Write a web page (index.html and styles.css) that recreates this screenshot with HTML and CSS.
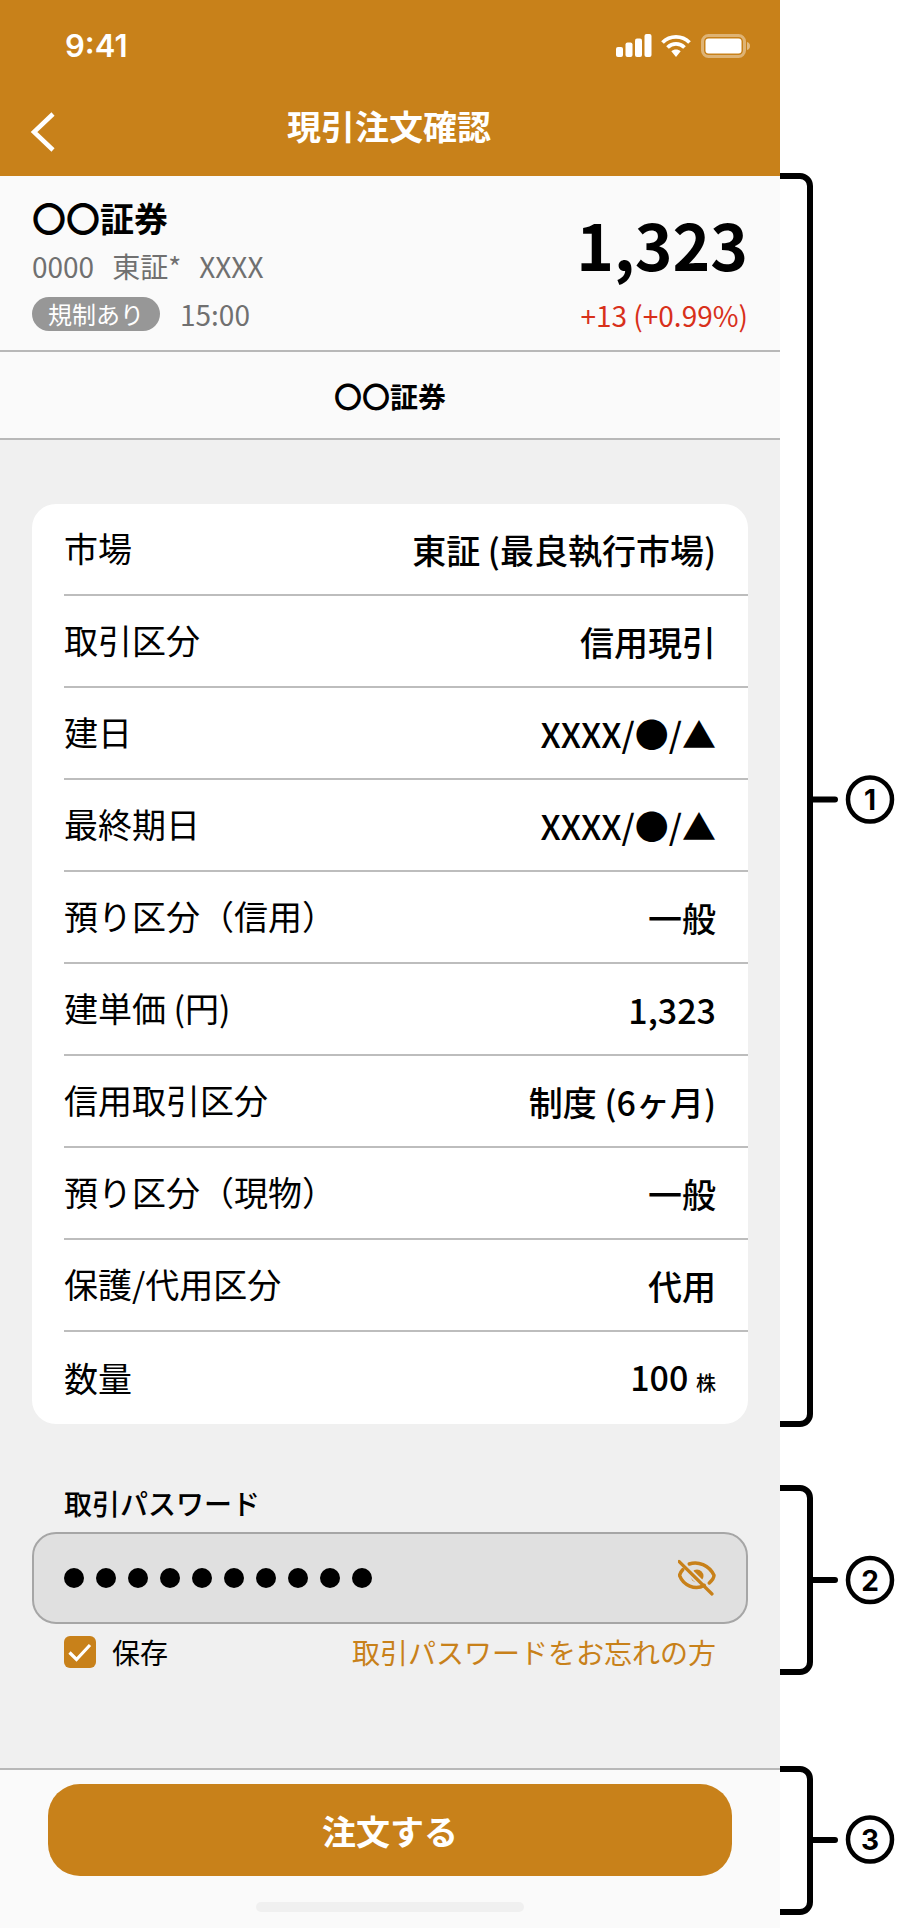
FILE: index.html
```html
<!DOCTYPE html>
<html lang="ja">
<head>
<meta charset="utf-8">
<title>現引注文確認</title>
<link rel="stylesheet" href="styles.css">
</head>
<body>
<div class="page">
  <div class="app">
    <header class="header">
      <div class="status">
        <span class="time">9:41</span>
        <div class="status-icons">
          <svg class="signal" width="36" height="23" viewBox="0 0 36 23"><rect x="0" y="13" width="7" height="10" rx="2"/><rect x="9.5" y="8.5" width="7" height="14.5" rx="2"/><rect x="19" y="4.500" width="7" height="18.500" rx="2"/><rect x="28.500" y="0" width="7" height="23" rx="2"/></svg>
          <svg class="wifi" width="30" height="23" viewBox="0 0 30 23"><path d="M1.500 8.500C9 1 21 1 28.500 8.500M6.500 13.500C11.500 8.700 18.500 8.700 23.500 13.500" fill="none" stroke="#fff" stroke-width="3.800"/><path d="M10.300 17.300C13 14.800 17 14.800 19.700 17.300L15 23Z" fill="#fff"/></svg>
          <svg class="battery" width="50" height="24" viewBox="0 0 50 24"><rect x="1.500" y="1.500" width="42" height="21" rx="6" fill="none" stroke="#fff" stroke-opacity=".4" stroke-width="3"/><rect x="4.500" y="4.500" width="36" height="15" rx="3" fill="#fff"/><path d="M46 8c2 .5 3 2 3 4s-1 3.500-3 4z" fill="#fff" fill-opacity=".45"/></svg>
        </div>
      </div>
      <nav class="nav">
        <svg class="back" width="28" height="42" viewBox="0 0 28 42"><path d="M24 3L5 21l19 18" fill="none" stroke="#fff" stroke-width="4.500"/></svg>
        <h1 class="title">現引注文確認</h1>
      </nav>
    </header>

    <section class="stock">
      <div class="stock-left">
        <div class="stock-name">〇〇証券</div>
        <div class="stock-meta"><span>0000</span><span>東証*</span><span>XXXX</span></div>
        <div class="stock-tags"><span class="badge">規制あり</span><span class="stock-time">15:00</span></div>
      </div>
      <div class="stock-right">
        <div class="price">1,323</div>
        <div class="change">+13 (+0.99%)</div>
      </div>
    </section>

    <div class="broker">〇〇証券</div>

    <main class="main">
      <div class="card">
        <div class="row"><span>市場</span><span class="val">東証 (最良執行市場)</span></div>
        <div class="row"><span>取引区分</span><span class="val">信用現引</span></div>
        <div class="row"><span>建日</span><span class="val">XXXX/●/▲</span></div>
        <div class="row"><span>最終期日</span><span class="val">XXXX/●/▲</span></div>
        <div class="row"><span>預り区分（信用）</span><span class="val">一般</span></div>
        <div class="row"><span>建単価 (円)</span><span class="val">1,323</span></div>
        <div class="row"><span>信用取引区分</span><span class="val">制度 (6ヶ月)</span></div>
        <div class="row"><span>預り区分（現物）</span><span class="val">一般</span></div>
        <div class="row"><span>保護/代用区分</span><span class="val">代用</span></div>
        <div class="row"><span>数量</span><span class="val">100 <small class="unit">株</small></span></div>
      </div>

      <div class="pw-label">取引パスワード</div>
      <div class="pw-input">
        <div class="dots"><i></i><i></i><i></i><i></i><i></i><i></i><i></i><i></i><i></i><i></i></div>
        <svg class="eye" width="38" height="38" viewBox="0 0 38 38">
          <circle cx="19" cy="17" r="6.500" fill="#c8811a"/>
          <path d="M1 2.500L34 35" stroke="#e0e0e0" stroke-width="7"/>
          <path d="M11.300 5C20 2 31 6 36 16.300C36 19 33.500 22 31.300 24M4.700 10.700C3 12.500 2 14.500 1.500 16.300C5 26 17 32 26.300 26.300" fill="none" stroke="#c8811a" stroke-width="3.500" stroke-linecap="round"/>
          <path d="M1 2.500L34 35" stroke="#c8811a" stroke-width="3.200" stroke-linecap="round"/>
        </svg>
      </div>
      <div class="pw-options">
        <label class="save">
          <svg class="check" width="32" height="32" viewBox="0 0 32 32"><rect width="32" height="32" rx="6" fill="#c8811a"/><path d="M5.500 16.500l7 7L26 9" fill="none" stroke="#fff" stroke-width="3.200"/></svg>
          <span>保存</span>
        </label>
        <a class="forgot">取引パスワードをお忘れの方</a>
      </div>
    </main>

    <footer class="footer">
      <button class="order">注文する</button>
      <div class="home"></div>
    </footer>
  </div>

  <svg class="notes" width="136" height="1928" viewBox="780 0 136 1928">
    <g fill="none" stroke="#000" stroke-width="6" stroke-linecap="butt">
      <path d="M780 176H800a10 10 0 0 1 10 10V1414a10 10 0 0 1-10 10H780"/>
      <path d="M780 1488H800a10 10 0 0 1 10 10V1662a10 10 0 0 1-10 10H780"/>
      <path d="M780 1769H800a10 10 0 0 1 10 10V1902a10 10 0 0 1-10 10H780"/>
      <path d="M810 799.500H835M810 1580H835M810 1840H835" stroke-linecap="round"/>
      <circle cx="870" cy="799.500" r="22" stroke-width="4.500"/>
      <circle cx="870" cy="1580" r="22" stroke-width="4.500"/>
      <circle cx="870" cy="1839.500" r="22" stroke-width="4.500"/>
    </g>
    <text class="note-num" x="870" y="810">1</text>
    <text class="note-num" x="870" y="1590.500">2</text>
    <text class="note-num" x="870" y="1850">3</text>
  </svg>
</div>
</body>
</html>
```
FILE: styles.css
```css
* { box-sizing: border-box; }
html, body { margin: 0; padding: 0; background: #fff; }
body { font-family: "Noto Sans CJK JP", "Noto Sans", sans-serif; color: #000; }
.page { display: flex; width: 916px; height: 1928px; overflow: hidden; }
.app { width: 780px; height: 1928px; flex: none; display: flex; flex-direction: column; background: #f0f0f0; }
.notes { flex: none; display: block; }
.note-num { font-family: Inter, sans-serif; font-weight: 700; font-size: 28px; text-anchor: middle; fill: #000; }

.header { height: 176px; background: #c8811a; color: #fff; flex: none; }
.status { height: 90px; display: flex; align-items: flex-start; justify-content: space-between; padding: 27px 29px 0 65px; }
.time { font-family: Inter, sans-serif; font-weight: 600; font-size: 31px; line-height: 38px; }
.status-icons { display: flex; align-items: flex-start; padding-top: 7px; }
.signal { fill: #fff; margin-right: 9px; }
.wifi { margin-right: 10px; }
.nav { height: 86px; position: relative; display: flex; align-items: center; justify-content: center; }
.back { position: absolute; left: 29px; top: 21px; }
.title { margin: 0; font-size: 34px; line-height: 48px; font-weight: 700; padding-right: 2px; transform: translateY(-7px); }

.stock { height: 176px; flex: none; background: #fafafa; border-bottom: 2px solid #b8b8b8; display: flex; justify-content: space-between; padding: 18px 32px 0; }
.stock-name { font-size: 34px; line-height: 48px; font-weight: 700; }
.stock-meta { display: flex; gap: 18px; font-size: 28px; line-height: 40px; color: #707070; margin-top: 4px; }
.stock-tags { display: flex; align-items: center; gap: 20px; margin-top: 8px; }
.badge { width: 128px; height: 34px; border-radius: 17px; background: #979797; color: #fff; font-size: 24px; line-height: 34px; text-align: center; }
.stock-time { font-size: 28px; line-height: 40px; color: #707070; }
.stock-right { text-align: right; }
.price { font-size: 64px; line-height: 90px; font-weight: 700; margin-top: 4px; }
.change { font-size: 28px; line-height: 40px; color: #d8301a; margin-top: 7px; }

.broker { height: 88px; flex: none; background: #fafafa; border-bottom: 2px solid #b8b8b8; text-align: center; font-size: 28px; line-height: 88px; font-weight: 700; }

.main { flex: 1; padding: 64px 32px 0; }
.card { background: #fff; border-radius: 24px; overflow: hidden; }
.row { height: 92px; margin-left: 32px; padding: 0 32px 2px 0; border-bottom: 2px solid #bdbdbd; display: flex; align-items: center; justify-content: space-between; font-size: 34px; line-height: 46px; }
.row:last-child { border-bottom: 0; padding-bottom: 0; }
.val { font-weight: 500; padding-top: 4px; }
.unit { font-size: 20px; }

.pw-label { font-size: 28px; font-weight: 500; line-height: 40px; margin: 59px 0 9px 32px; }
.pw-input { height: 92px; border: 2px solid #a6a6a6; border-radius: 24px; background: #e0e0e0; display: flex; align-items: center; justify-content: space-between; padding: 0 30px 0 30px; }
.dots { display: flex; gap: 12px; }
.dots i { width: 20px; height: 20px; border-radius: 50%; background: #000; display: block; }
.eye { display: block; }
.pw-options { display: flex; align-items: center; justify-content: space-between; margin: 12px 32px 0; height: 32px; }
.save { display: flex; align-items: center; gap: 16px; font-size: 28px; line-height: 40px; }
.check { display: block; }
.forgot { font-size: 28px; line-height: 40px; color: #c8811a; }

.footer { height: 160px; flex: none; background: #fafafa; border-top: 2px solid #b8b8b8; padding: 14px 48px 0; display: flex; flex-direction: column; align-items: center; }
.order { width: 684px; height: 92px; border: 0; border-radius: 32px; background: #c8811a; color: #fff; font-family: inherit; font-size: 34px; font-weight: 700; padding: 0; flex: none; }
.home { width: 268px; height: 10px; border-radius: 5px; background: #f0f0f0; margin-top: 26px; flex: none; }
```
